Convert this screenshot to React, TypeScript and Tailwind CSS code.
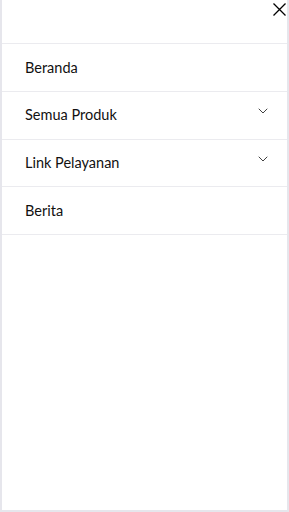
import { ChevronDown } from 'lucide-react';

const items = [
  { label: 'Beranda', sub: false },
  { label: 'Semua Produk', sub: true },
  { label: 'Link Pelayanan', sub: true },
  { label: 'Berita', sub: false },
];

export default function App() {
  return (
    <div
      className="flex h-[512px] w-[289px] flex-col border-2 border-t-0 border-[#e6e6ec] bg-white text-[#111]"
      style={{ fontFamily: 'Lato, "Noto Sans", sans-serif' }}
    >
      <div className="flex h-[43px] items-start justify-end pt-[3px] pr-[1px]">
        <button type="button" aria-label="Tutup" className="h-[13px] w-[13px]">
          <svg width="13" height="13" viewBox="0 0 13 13" fill="none" stroke="black" strokeWidth="1.3">
            <path d="M0.5 0.5 12.5 12.5M12.5 0.5 0.5 12.5" />
          </svg>
        </button>
      </div>
      <ul className="flex flex-col border-t border-[#ebebef]">
        {items.map((item) => (
          <li
            key={item.label}
            className="relative flex h-[47.75px] items-center border-b border-[#ebebef] pl-[23px] text-[14.5px]"
          >
            {item.label}
            {item.sub && (
              <ChevronDown
                size={16}
                strokeWidth={1.4}
                className="absolute top-[11px] right-[16px] text-[#333]"
              />
            )}
          </li>
        ))}
      </ul>
    </div>
  );
}
